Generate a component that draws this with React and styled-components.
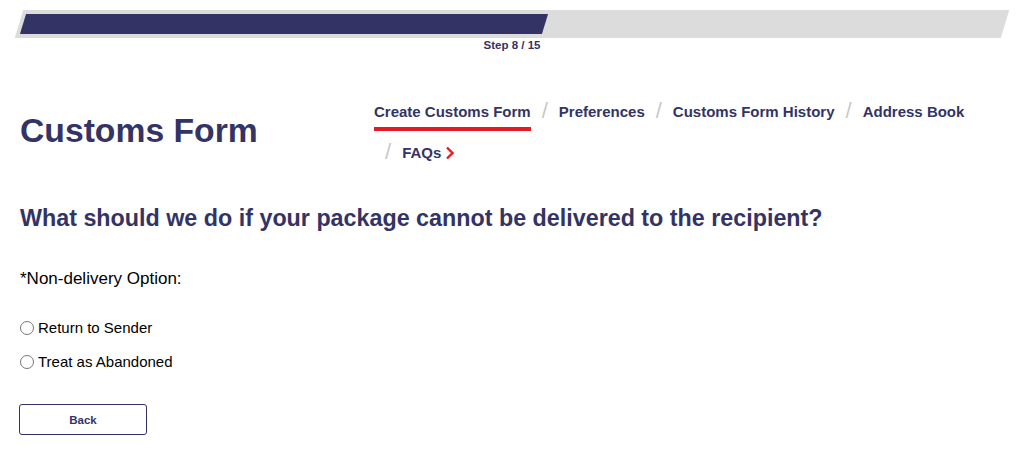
import React from "react";
import styled, { createGlobalStyle } from "styled-components";

const NAVY = "#333366";
const RED = "#e71921";

const GlobalStyle = createGlobalStyle`
  body {
    margin: 0;
    background: #fff;
    font-family: "Liberation Sans", Arial, sans-serif;
  }
`;

const navItems = [
  { label: "Create Customs Form", active: true },
  { label: "Preferences" },
  { label: "Customs Form History" },
  { label: "Address Book" },
  { label: "FAQs", chevron: true },
];

const options = ["Return to Sender", "Treat as Abandoned"];

export default function App() {
  const step = 8;
  const total = 15;
  return (
    <Page>
      <GlobalStyle />
      <Progress>
        <Track>
          <Fill style={{ width: `${(step / total) * 100}%` }} />
        </Track>
        <StepText>
          Step {step} / {total}
        </StepText>
      </Progress>

      <Header>
        <Title>Customs Form</Title>
        <Nav>
          {navItems.map((item, i) => (
            <NavItem key={item.label} first={i === 0}>
              <NavLink active={item.active}>
                {item.label}
                {item.chevron && (
                  <Chevron viewBox="0 0 10 14">
                    <path d="M2 1.5 L7.5 7 L2 12.5" fill="none" stroke={RED} strokeWidth="2.4" />
                  </Chevron>
                )}
              </NavLink>
            </NavItem>
          ))}
        </Nav>
      </Header>

      <Question>What should we do if your package cannot be delivered to the recipient?</Question>

      <Label>*Non-delivery Option:</Label>

      <Options>
        {options.map((o) => (
          <Option key={o}>
            <Radio type="radio" name="nondelivery" />
            {o}
          </Option>
        ))}
      </Options>

      <BackButton>Back</BackButton>
    </Page>
  );
}

const Page = styled.div`
  padding: 10px 19px 20px;
`;

const Progress = styled.div`
  display: flex;
  flex-direction: column;
  align-items: center;
`;

const Track = styled.div`
  width: 100%;
  box-sizing: border-box;
  height: 28px;
  padding: 4px 4px;
  background: #dcdcdc;
  transform: skewX(-17deg);
`;

const Fill = styled.div`
  height: 100%;
  background: ${NAVY};
`;

const StepText = styled.div`
  margin-top: 1px;
  font-size: 11.5px;
  font-weight: bold;
  color: ${NAVY};
`;

const Header = styled.div`
  display: flex;
  align-items: flex-start;
  margin-top: 48px;
`;

const Title = styled.h1`
  margin: 12px 0 0 1px;
  width: 354px;
  flex-shrink: 0;
  font-size: 33.7px;
  font-weight: bold;
  color: ${NAVY};
`;

const Nav = styled.ul`
  display: flex;
  flex-wrap: wrap;
  list-style: none;
  margin: 3px 0 0;
  padding: 0;
  width: 620px;
`;

const NavItem = styled.li`
  display: flex;
  align-items: flex-start;
  height: 41px;
  font-size: 15px;
  font-weight: bold;
  &::before {
    content: ${(p) => (p.first ? "none" : '"/"')};
    color: #c8c8c8;
    font-weight: normal;
    font-size: 22px;
    line-height: 20px;
    margin: -1px 11px 0 11px;
  }
`;

const NavLink = styled.span`
  display: inline-flex;
  align-items: center;
  color: ${NAVY};
  line-height: 20px;
  padding-bottom: 5px;
  height: 20px;
  border-bottom: 4px solid ${(p) => (p.active ? RED : "transparent")};
`;

const Chevron = styled.svg`
  width: 10px;
  height: 14px;
  margin-left: 4px;
`;

const Question = styled.h2`
  margin: 21px 0 0 1px;
  font-size: 23.3px;
  font-weight: bold;
  color: ${NAVY};
`;

const Label = styled.div`
  margin: 37px 0 0 1px;
  font-size: 17px;
  color: #000;
`;

const Options = styled.div`
  display: flex;
  flex-direction: column;
  gap: 17px;
  margin-top: 30px;
`;

const Option = styled.label`
  display: flex;
  align-items: center;
  gap: 4px;
  font-size: 15px;
  color: #000;
`;

const Radio = styled.input`
  appearance: none;
  width: 14px;
  height: 14px;
  margin: 0 0 0 1px;
  border: 1px solid #767676;
  border-radius: 50%;
  background: #fff;
`;

const BackButton = styled.button`
  display: block;
  margin-top: 34px;
  width: 128px;
  height: 31px;
  border: 1.5px solid ${NAVY};
  border-radius: 3px;
  background: #fff;
  color: ${NAVY};
  font-family: "Liberation Sans", Arial, sans-serif;
  font-size: 11.5px;
  font-weight: bold;
`;
